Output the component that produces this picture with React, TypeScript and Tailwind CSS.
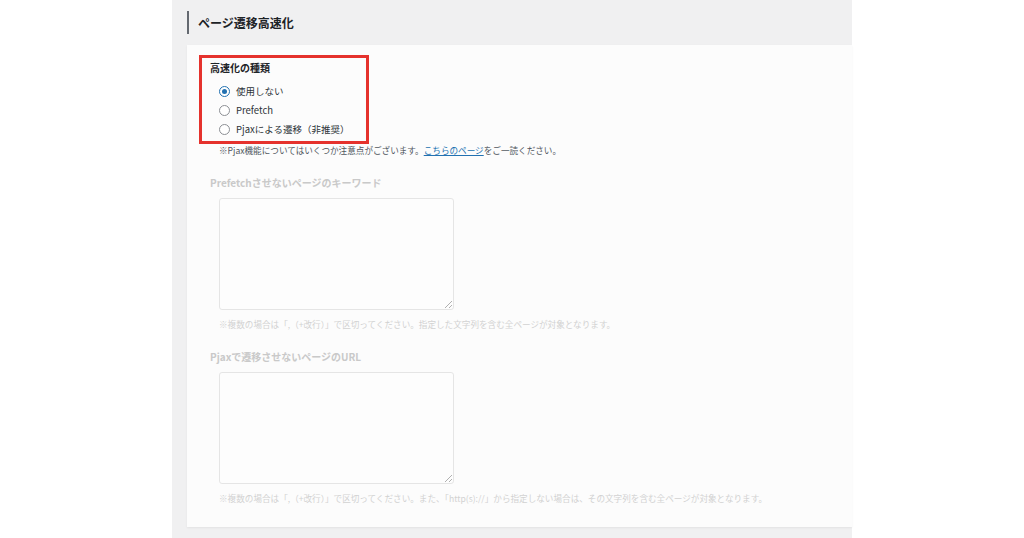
const font = { fontFamily: '"Noto Sans CJK JP", "Noto Sans", sans-serif' };

type RadioProps = { label: string; checked?: boolean };

function Radio({ label, checked }: RadioProps) {
    return (
        <label className="flex items-center h-[19px] gap-[6px]">
            <span
                className={`w-[11px] h-[11px] rounded-full border bg-white flex items-center justify-center ${checked ? 'border-[#2271b1]' : 'border-[#8c8f94]'}`}
            >
                {checked && <span className="w-[5px] h-[5px] rounded-full bg-[#2271b1]" />}
            </span>
            <span className="text-[9.5px] text-[#2c3338]">{label}</span>
        </label>
    );
}

function FadedField({ title, note }: { title: string; note: string }) {
    return (
        <div>
            <div className="text-[10px] font-bold text-[#c9c9c9] leading-[14px]">{title}</div>
            <textarea
                readOnly
                className="block mt-[8px] ml-[9px] w-[235px] h-[112px] rounded-[3px] border border-[#cfcfcf] bg-white opacity-50"
            />
            <div className="mt-[8px] ml-[9px] text-[8.6px] text-[#d2d2d2] leading-[12px]">※{note}</div>
        </div>
    );
}

export default function App() {
    return (
        <div className="w-[1024px] h-[538px] bg-white overflow-hidden" style={font}>
            <div className="ml-[172px] w-[680px] h-full bg-[#f0f0f1]">
                <div className="h-[45px] pl-[15px] flex items-center">
                    <div className="h-[23px] border-l-2 border-[#646970] pl-[9px] flex items-center">
                        <h2 className="text-[12px] font-bold text-[#1d2327]">ページ遷移高速化</h2>
                    </div>
                </div>
                <div className="relative ml-[15px] h-[482px] bg-[#fcfcfc] shadow-[0_1px_2px_rgba(0,0,0,0.06)] pl-[23px] pt-[16px]">
                    <div className="absolute left-[12px] top-[10px] w-[170px] h-[89px] border-[3px] border-[#e5322d]" />
                    <div className="text-[10px] font-bold text-[#1d2327] leading-[14px]">高速化の種類</div>
                    <div className="mt-[7px] ml-[9px] flex flex-col">
                        <Radio label="使用しない" checked />
                        <Radio label="Prefetch" />
                        <Radio label="Pjaxによる遷移（非推奨）" />
                    </div>
                    <div className="mt-[5px] ml-[9px] text-[8.6px] text-[#50575e] leading-[12px]">
                        ※Pjax機能についてはいくつか注意点がございます。
                        <a className="text-[#2271b1] underline">こちらのページ</a>
                        をご一読ください。
                    </div>
                    <div className="mt-[20px]">
                        <FadedField
                            title="Prefetchさせないページのキーワード"
                            note="複数の場合は「,（+改行）」で区切ってください。指定した文字列を含む全ページが対象となります。"
                        />
                    </div>
                    <div className="mt-[20px]">
                        <FadedField
                            title="Pjaxで遷移させないページのURL"
                            note="複数の場合は「,（+改行）」で区切ってください。また、「http(s)://」から指定しない場合は、その文字列を含む全ページが対象となります。"
                        />
                    </div>
                </div>
            </div>
        </div>
    );
}
